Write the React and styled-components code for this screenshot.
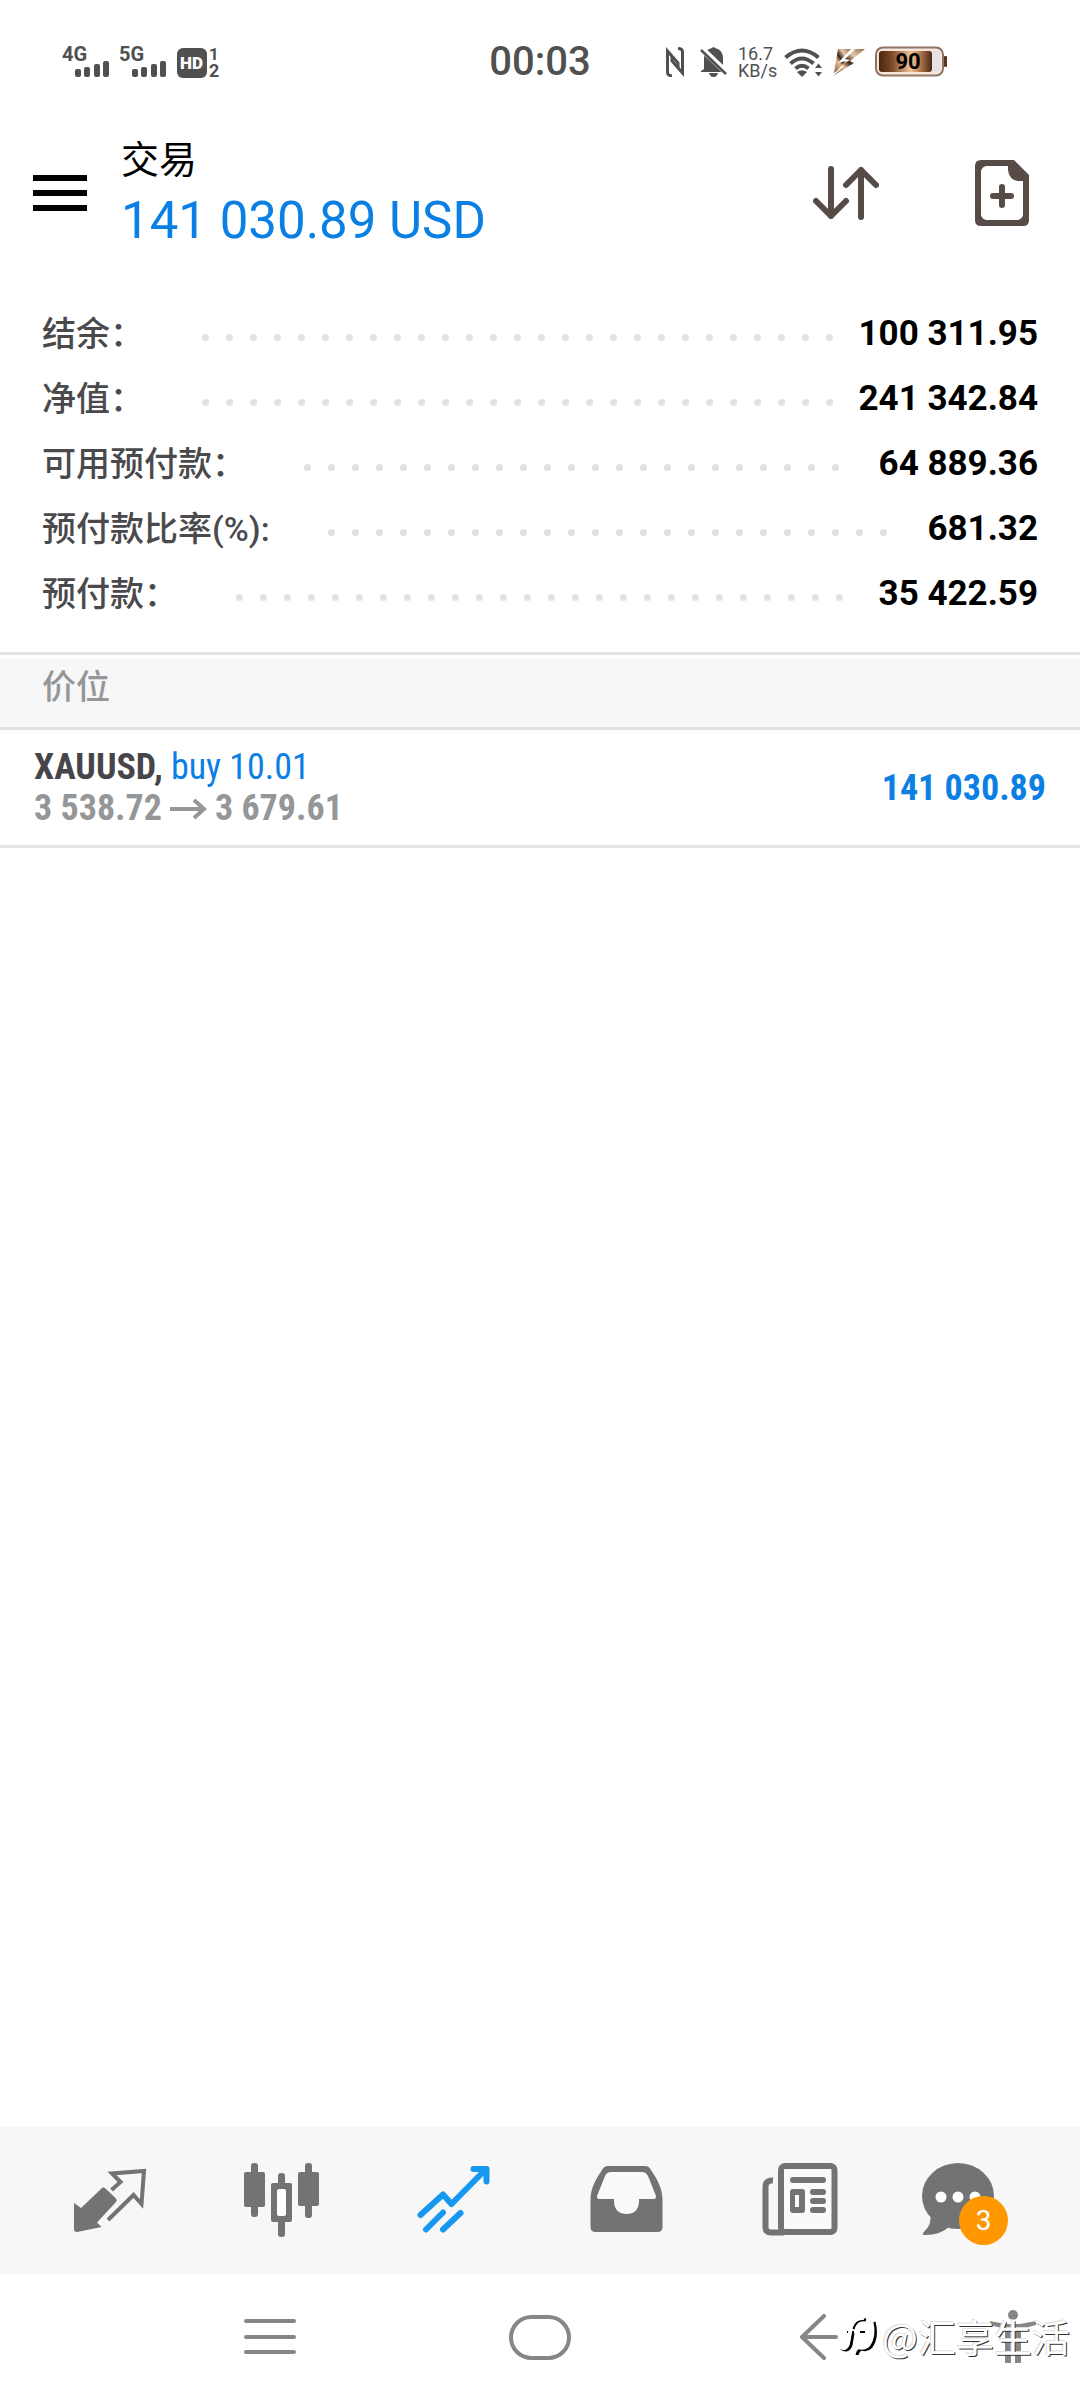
import React, { useState } from 'react';
import styled, { createGlobalStyle } from 'styled-components';

const GlobalStyle = createGlobalStyle`
  * {
    box-sizing: border-box;
  }
  body {
    margin: 0;
    background: #fff;
    font-family: Roboto, 'Noto Sans CJK SC', sans-serif;
    color: #000;
  }
  button {
    padding: 0;
    border: none;
    background: none;
    cursor: pointer;
  }
  svg {
    display: block;
  }
`;

const Page = styled.div`
  display: flex;
  flex-direction: column;
  min-height: 100vh;
`;

const StatusBar = styled.div`
  display: grid;
  grid-template-columns: 1fr auto 1fr;
  align-items: center;
  height: 124px;
  padding: 0 62px;
  color: #505050;
`;

const StatusGroup = styled.div`
  display: flex;
  align-items: center;
  justify-content: ${(props) => (props.$end ? 'flex-end' : 'flex-start')};
  gap: 10px;
  padding-right: ${(props) => (props.$end ? '71px' : '0')};
`;

const Clock = styled.time`
  font-size: 40px;
  font-weight: 500;
  line-height: 40px;
`;

const Speed = styled.div`
  width: 36px;
  font-size: 18px;
  line-height: 17px;
  white-space: nowrap;
`;

const Header = styled.header`
  display: flex;
  align-items: center;
  padding: 8px 51px 0 33px;
`;

const HeaderText = styled.div`
  flex: 1;
  padding-left: 34px;
`;

const Title = styled.h1`
  margin: 0;
  font-size: 38px;
  font-weight: 400;
  line-height: 56px;
`;

const Amount = styled.div`
  font-size: 51px;
  line-height: 65px;
  color: #0b80e4;
`;

const HeaderActions = styled.div`
  display: flex;
  align-items: center;
  gap: 96px;
`;

const Summary = styled.dl`
  margin: 0;
  padding: 48px 42px 26px;
  border-bottom: 3px solid #e3e3e3;
`;

const SummaryRow = styled.div`
  display: flex;
  align-items: center;
  height: 65px;
`;

const SummaryLabel = styled.dt`
  font-size: 34px;
  font-weight: 500;
  line-height: 50px;
  color: #4a4a4d;
`;

const SummaryValue = styled.dd`
  margin: 0;
  font-size: 35px;
  font-weight: 700;
  line-height: 40px;
`;

// wraps whole dots only, the overflow is hidden
const DotLine = styled.div`
  flex: 1;
  display: flex;
  flex-wrap: wrap;
  height: 24px;
  margin: 8px 12px 0 50px;
  overflow: hidden;
`;

const Dot = styled.span`
  width: 7px;
  height: 7px;
  margin: 8px 9px 9px 8px;
  border-radius: 50%;
  background: #e2e2e2;
`;

const SectionTitle = styled.h2`
  margin: 3px 0 0;
  padding: 4px 42px 15px;
  border-bottom: 3px solid #e3e3e3;
  background: #f7f7f7;
  font-size: 34px;
  font-weight: 500;
  line-height: 50px;
  color: #949698;
`;

const Position = styled.div`
  display: flex;
  align-items: center;
  justify-content: space-between;
  padding: 17px 34px 16px;
  border-bottom: 3px solid #e3e3e3;
  font-family: 'Roboto Condensed', 'Liberation Sans Narrow', Roboto, sans-serif;
  font-size: 36px;
  font-weight: 700;
  line-height: 41px;
`;

const PositionLine = styled.div`
  display: flex;
  align-items: center;
  gap: 8px;
  color: ${(props) => (props.$muted ? '#949698' : '#46464a')};
`;

const Side = styled.span`
  font-weight: 400;
  color: #0b80e4;
`;

const Profit = styled.div`
  color: #0b80e4;
`;

const Empty = styled.div`
  flex: 1;
`;

const TabBar = styled.nav`
  display: grid;
  grid-template-columns: repeat(6, 1fr);
  height: 147px;
  padding: 0 24px;
  background: #f7f7f7;
`;

const Tab = styled.button`
  display: flex;
  align-items: center;
  justify-content: center;
  color: ${(props) => (props.$active ? '#1698f0' : '#737373')};
`;

const TabIcon = styled.span`
  position: relative;
`;

const Badge = styled.span`
  position: absolute;
  left: 37px;
  top: 38px;
  width: 49px;
  height: 49px;
  border-radius: 50%;
  background: #ff9800;
  color: #fff;
  font-family: Roboto, sans-serif;
  font-size: 28px;
  line-height: 49px;
  text-align: center;
`;

const SystemBar = styled.div`
  position: relative;
  display: grid;
  grid-template-columns: 135px repeat(3, 1fr) 135px;
  height: 126px;
`;

const SystemButton = styled.button`
  display: flex;
  align-items: center;
  justify-content: center;
  color: #868686;
`;

const Watermark = styled.div`
  position: absolute;
  right: 10px;
  top: 34px;
  display: flex;
  align-items: center;
  gap: 4px;
  font-family: 'Noto Sans CJK SC', sans-serif;
  font-size: 38px;
  line-height: 56px;
  color: #fff;
  text-shadow: 1px 1px 0 #333, -1px -1px 0 #ddd;
`;

const Signal = ({ label }) => (
  <svg width="47" height="44" viewBox="0 -5 47 44" fill="currentColor">
    <text x="0" y="16" fontSize="20" fontWeight="700">{label}</text>
    <rect x="13" y="24" width="6" height="8" rx="2" />
    <rect x="22" y="22" width="6" height="10" rx="2" />
    <rect x="32" y="19" width="6" height="13" rx="2" />
    <rect x="41" y="16" width="6" height="16" rx="2" />
  </svg>
);

const HdIcon = () => (
  <svg width="46" height="44" viewBox="-1 -5 46 44" fill="currentColor">
    <rect x="0" y="3" width="30" height="30" rx="6" />
    <text x="3" y="24" fontSize="17" fontWeight="900" fill="#fff">HD</text>
    <text x="32" y="15" fontSize="17" fontWeight="700">1</text>
    <text x="32" y="32" fontSize="18" fontWeight="700">2</text>
  </svg>
);

const NfcIcon = () => (
  <svg width="24" height="30" viewBox="0 0 24 30" fill="none" stroke="currentColor" strokeWidth="3">
    <path d="M6 29 Q1.500 28.500 1.500 25 V4 L12 16 V21" />
    <path d="M12 1.500 Q16.500 1.500 16.500 5 V26 L6 14 V9" />
  </svg>
);

const BellOffIcon = () => (
  <svg width="28" height="30" viewBox="0 0 28 30">
    <path d="M4 22 V12 C4 5 8 2 11 1.500 Q13.500 -1 16 1.500 C20 2 23 6 23 11 V20 L26 23 V25 H1 V24 Z" fill="currentColor" />
    <path d="M9 26 H18 Q17 30 13.500 30 Q10 30 9 26 Z" fill="currentColor" />
    <path d="M0 0 L28 27" stroke="#fff" strokeWidth="6" />
    <path d="M1 3 L26 27" stroke="currentColor" strokeWidth="2.500" />
  </svg>
);

const WifiIcon = () => (
  <svg width="39" height="30" viewBox="0 0 39 30">
    <g fill="none" stroke="currentColor" strokeWidth="4">
      <path d="M1.500 10.500 Q18 -3.500 34.500 10.500" />
      <path d="M6.500 16.500 Q18 6.500 29.500 16.500" />
      <path d="M11.500 21.500 Q18 16 24.500 21.500" />
    </g>
    <path d="M13 25 Q18 21.500 23 25 L18 30 Z" fill="currentColor" />
    <path d="M31 21 L34.500 16.500 L38 21 Z M31 25 L34.500 29.500 L38 25 Z" fill="currentColor" />
  </svg>
);

const BoltIcon = () => (
  <svg width="32" height="30" viewBox="0 0 32 30">
    <defs>
      <linearGradient id="bolt" x1="0" y1="1" x2="1" y2="0">
        <stop offset="0" stopColor="#7d5a40" />
        <stop offset="0.35" stopColor="#e2b78f" />
        <stop offset="0.5" stopColor="#3a2416" />
        <stop offset="0.7" stopColor="#e8c9aa" />
        <stop offset="1" stopColor="#8a6a50" />
      </linearGradient>
    </defs>
    <path d="M5 2 H18 L5 16 L13 14 L4 24 L1 26 Z" fill="url(#bolt)" />
    <path d="M22 2 H32 L17 14 L21 16 L0 29 L11 19 L8 18 L17 13 L12 12 Z" fill="url(#bolt)" />
  </svg>
);

const BatteryIcon = () => (
  <svg width="72" height="32" viewBox="0 0 72 32">
    <defs>
      <linearGradient id="charge" x1="0" y1="0" x2="1" y2="0">
        <stop offset="0" stopColor="#4a2610" />
        <stop offset="0.25" stopColor="#7d4b27" />
        <stop offset="0.6" stopColor="#f0c49a" />
        <stop offset="0.8" stopColor="#a97046" />
        <stop offset="1" stopColor="#4a2610" />
      </linearGradient>
    </defs>
    <rect x="0" y="11" width="3" height="10" fill="#3a2416" />
    <rect x="1" y="1.500" width="67" height="28" rx="7" fill="#f4e6dc" stroke="#8f7462" strokeWidth="2" />
    <rect x="4" y="5" width="53" height="21" rx="3" fill="url(#charge)" />
    <rect x="57" y="5" width="8" height="21" fill="#e4e2e2" />
    <rect x="69" y="10" width="3" height="11" rx="1" fill="#5a3620" />
    <text x="33" y="23" fontSize="22" fontWeight="700" textAnchor="middle" fill="#000">90</text>
  </svg>
);

const MenuIcon = () => (
  <svg width="54" height="36" viewBox="0 0 54 36">
    <path d="M0 3 H54 M0 18 H54 M0 33 H54" stroke="#000" strokeWidth="6" />
  </svg>
);

const SortIcon = () => (
  <svg width="66" height="54" viewBox="0 0 66 54" fill="none" stroke="#574b48" strokeWidth="6" strokeLinecap="round" strokeLinejoin="round">
    <path d="M18 3 V50 M3 35 L18 50 L33 35" />
    <path d="M48 51 V4 M33 19 L48 4 L63 19" />
  </svg>
);

const NewOrderIcon = () => (
  <svg width="54" height="66" viewBox="0 0 54 66">
    <path d="M6 0 H39 L54 15 V60 Q54 66 48 66 H6 Q0 66 0 60 V6 Q0 0 6 0 Z" fill="#574b48" />
    <path d="M11 6 H33 V10 Q34 20 43 21 H48 V55 Q47 59 43 60 H11 Q7 59 6 55 V11 Q7 7 11 6 Z" fill="#fff" />
    <path d="M18 36 H36 M27 27 V45" stroke="#574b48" strokeWidth="6" strokeLinecap="round" />
  </svg>
);

const PriceArrow = () => (
  <svg width="37" height="22" viewBox="0 0 37 22" fill="none" stroke="currentColor" strokeWidth="4">
    <path d="M0 11 H34 M24 2 L34 11 L24 20" />
  </svg>
);

const QuotesIcon = () => (
  <svg width="96" height="85" viewBox="0 0 96 85">
    <path
      d="M49.500 32 L58.500 24 L50 15.500 L82 13 L79.500 46 L71.500 37 L46 62"
      fill="none"
      stroke="currentColor"
      strokeWidth="4"
    />
    <path
      d="M39.500 30.500 Q41.500 28.500 43.500 30.500 L54 40.500 Q55.500 42.500 54 44 L35 64.500 L39.500 69 L15 74 Q12 74 12 71 V45 L19 50 Z"
      fill="currentColor"
    />
  </svg>
);

const ChartIcon = () => (
  <svg width="96" height="85" viewBox="0 0 96 85" fill="currentColor">
    <rect x="17" y="5" width="7" height="54" rx="3" />
    <rect x="10" y="14" width="21" height="35" rx="2" />
    <rect x="71" y="5" width="7" height="55" rx="3" />
    <rect x="64" y="14" width="21" height="34" rx="2" />
    <rect x="44" y="15" width="7" height="64" rx="3" />
    <rect x="37" y="25" width="21" height="39" rx="2" />
    <rect x="43" y="31" width="9" height="27" rx="2" fill="#fff" />
  </svg>
);

const TradeIcon = () => (
  <svg width="96" height="85" viewBox="0 0 96 85" fill="none" stroke="currentColor" strokeWidth="6" strokeLinecap="round" strokeLinejoin="round">
    <path d="M14.500 57 L37 36.500 L45.500 46 L79 12" />
    <path d="M67.500 11 H80.500 V23.500" />
    <path d="M71 11 H80.500 V21 Z" fill="currentColor" stroke="none" />
    <path d="M20 71.500 L37 54.500 M37 71.500 L54.500 55" />
  </svg>
);

const HistoryIcon = () => (
  <svg width="96" height="85" viewBox="0 0 96 85">
    <path
      d="M30 8 H67 Q71 8 73 12 C79 21 84.500 30 84.500 42 V69 Q84.500 74 79.500 74 H17.500 Q12.500 74 12.500 69 V42 C12.500 30 18 21 24 12 Q26 8 30 8 Z"
      fill="currentColor"
    />
    <path
      d="M33 14 H64 Q68 14 70 18 L78 38 Q78 41 76 41 H61 V44 Q60 56 48.500 56 Q37 56 36 44 V41 H21 Q19 41 19 38 L27 18 Q29 14 33 14 Z"
      fill="#fafafa"
    />
  </svg>
);

const NewsIcon = () => (
  <svg width="96" height="85" viewBox="0 0 96 85" fill="currentColor">
    <path d="M23 22.500 Q15.500 22 15.500 29 V69 Q15.500 74.500 21 74.500 H34" fill="none" stroke="currentColor" strokeWidth="6" />
    <rect x="31" y="8" width="53.500" height="66" rx="4" fill="#fafafa" stroke="currentColor" strokeWidth="6" />
    <rect x="40" y="19" width="36" height="6" rx="3" />
    <rect x="40" y="31" width="15" height="24" rx="3" />
    <rect x="45" y="37" width="4" height="12" fill="#fafafa" />
    <rect x="60" y="31" width="16" height="6" rx="3" />
    <rect x="60" y="40" width="16" height="6" rx="3" />
    <rect x="60" y="49" width="16" height="6" rx="3" />
  </svg>
);

const ChatIcon = () => (
  <svg width="96" height="85" viewBox="0 0 96 85" fill="currentColor">
    <ellipse cx="36" cy="38" rx="36" ry="33" />
    <path d="M8 55 Q11 66 1 75 Q0 77 3 77 Q19 77 28 68 Z" />
    <circle cx="19" cy="39" r="5.500" fill="#fff" />
    <circle cx="36" cy="39" r="5.500" fill="#fff" />
    <circle cx="53" cy="39" r="5.500" fill="#fff" />
  </svg>
);

const RecentsIcon = () => (
  <svg width="54" height="36" viewBox="0 0 54 36" stroke="currentColor" strokeWidth="4" strokeLinecap="round">
    <path d="M3 2 H51 M3 18 H51 M3 33 H51" />
  </svg>
);

const HomeIcon = () => (
  <svg width="62" height="45" viewBox="0 0 62 45" fill="none" stroke="currentColor" strokeWidth="4">
    <rect x="2" y="2" width="58" height="41" rx="20.500" />
  </svg>
);

const BackIcon = () => (
  <svg width="56" height="46" viewBox="-18 0 56 46" fill="none" stroke="currentColor" strokeWidth="4" strokeLinecap="round" strokeLinejoin="round">
    <path d="M24 2 L2 23 L24 44 M2 23 H36" />
  </svg>
);

const AccessibilityIcon = () => (
  <svg width="48" height="54" viewBox="0 0 48 54" fill="currentColor">
    <circle cx="24" cy="5" r="5" />
    <path d="M1 11 L16 14 H31 L47 11 V15 L32 19 V53 H26 V36 H22 V53 H16 V19 L1 15 Z" />
  </svg>
);

const WatermarkLogo = () => (
  <svg width="38" height="42" viewBox="0 0 38 42" fill="none" strokeWidth="4">
    <path d="M1 33 Q8 38 11 30 L13 18 M13 14 Q16 3 26 5" stroke="#000" strokeWidth="3" />
    <path d="M7 17 H14 M20 17 H25" stroke="#000" strokeWidth="2" />
    <path d="M34 7 Q38 22 31 32 Q27 36 22 34 Q18 35 17 40" stroke="#000" strokeWidth="3" />
    <path d="M-1 31 Q6 36 8 28 L11 12 Q14 2 24 3" stroke="#fff" />
    <path d="M31 5 Q35 21 28 30 Q24 34 18 32" stroke="#fff" />
  </svg>
);

const summary = [
  { label: '结余：', value: '100 311.95' },
  { label: '净值：', value: '241 342.84' },
  { label: '可用预付款：', value: '64 889.36' },
  { label: '预付款比率(%):', value: '681.32' },
  { label: '预付款：', value: '35 422.59' },
];

const tabs = [
  { id: 'quotes', label: '行情', Icon: QuotesIcon },
  { id: 'chart', label: '图表', Icon: ChartIcon },
  { id: 'trade', label: '交易', Icon: TradeIcon },
  { id: 'history', label: '历史', Icon: HistoryIcon },
  { id: 'news', label: '新闻', Icon: NewsIcon },
  { id: 'messages', label: '消息', Icon: ChatIcon, badge: 3 },
];

const dots = Array.from({ length: 80 }, (_, i) => i);

const App = () => {
  const [activeTab, setActiveTab] = useState('trade');

  return (
    <Page>
      <GlobalStyle />
      <StatusBar>
        <StatusGroup>
          <Signal label="4G" />
          <Signal label="5G" />
          <HdIcon />
        </StatusGroup>
        <Clock>00:03</Clock>
        <StatusGroup $end>
          <NfcIcon />
          <BellOffIcon />
          <Speed>
            16.7
            <br />
            KB/s
          </Speed>
          <WifiIcon />
          <BoltIcon />
          <BatteryIcon />
        </StatusGroup>
      </StatusBar>

      <Header>
        <button aria-label="菜单">
          <MenuIcon />
        </button>
        <HeaderText>
          <Title>交易</Title>
          <Amount>141 030.89 USD</Amount>
        </HeaderText>
        <HeaderActions>
          <button aria-label="排序">
            <SortIcon />
          </button>
          <button aria-label="新订单">
            <NewOrderIcon />
          </button>
        </HeaderActions>
      </Header>

      <Summary>
        {summary.map((row) => (
          <SummaryRow key={row.label}>
            <SummaryLabel>{row.label}</SummaryLabel>
            <DotLine>
              {dots.map((i) => (
                <Dot key={i} />
              ))}
            </DotLine>
            <SummaryValue>{row.value}</SummaryValue>
          </SummaryRow>
        ))}
      </Summary>

      <SectionTitle>价位</SectionTitle>
      <Position>
        <div>
          <PositionLine>
            XAUUSD, <Side>buy 10.01</Side>
          </PositionLine>
          <PositionLine $muted>
            3 538.72 <PriceArrow /> 3 679.61
          </PositionLine>
        </div>
        <Profit>141 030.89</Profit>
      </Position>

      <Empty />

      <TabBar>
        {tabs.map(({ id, label, Icon, badge }) => (
          <Tab key={id} aria-label={label} $active={id === activeTab} onClick={() => setActiveTab(id)}>
            <TabIcon>
              <Icon />
              {badge && <Badge>{badge}</Badge>}
            </TabIcon>
          </Tab>
        ))}
      </TabBar>

      <SystemBar>
        <span />
        <SystemButton aria-label="最近任务">
          <RecentsIcon />
        </SystemButton>
        <SystemButton aria-label="主屏幕">
          <HomeIcon />
        </SystemButton>
        <SystemButton aria-label="返回">
          <BackIcon />
        </SystemButton>
        <SystemButton aria-label="无障碍">
          <AccessibilityIcon />
        </SystemButton>
        <Watermark>
          <WatermarkLogo />
          @汇享生活
        </Watermark>
      </SystemBar>
    </Page>
  );
};

export default App;
